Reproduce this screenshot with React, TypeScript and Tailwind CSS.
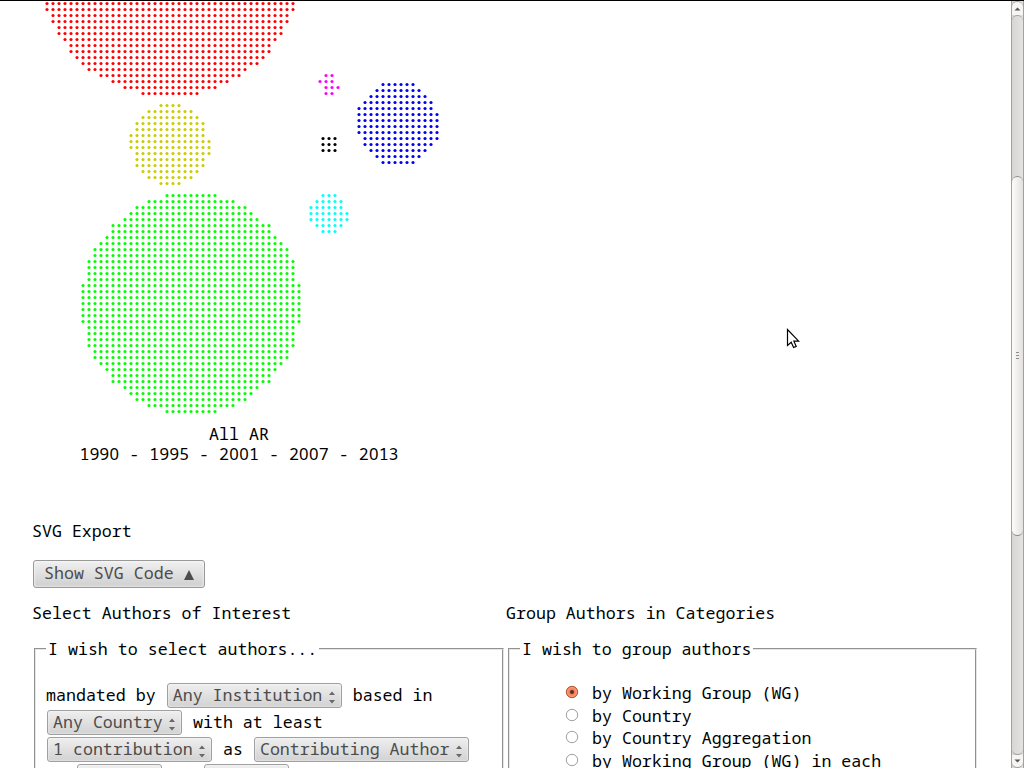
import type { ReactNode } from "react";

type Span = [number, number];

const mirrored: Span[] = [
  [14, 22], [11, 25], [9, 27], [8, 28], [7, 29], [5, 31], [5, 31], [4, 32], [3, 33], [2, 34], [2, 34],
  [1, 35], [1, 35], [1, 35], [1, 35], [0, 36], [0, 36], [0, 36],
];

const groups: { name: string; x: number; y: number; color: string; rows: Span[] }[] = [
  {
    name: "red", x: 47, y: 3.5, color: "#ff0000",
    rows: [[0, 41], [0, 41], [1, 40], [1, 40], [2, 39], [2, 39], [3, 38], [4, 37], [4, 37], [5, 36], [6, 35], [7, 33], [9, 32], [11, 30], [13, 28], [16, 25]],
  },
  {
    name: "yellow", x: 131, y: 105.5, color: "#cccc00",
    rows: [[5, 8], [3, 10], [2, 11], [1, 12], [1, 12], [0, 12], [0, 13], [0, 13], [1, 13], [1, 12], [1, 12], [2, 11], [3, 10], [5, 8]],
  },
  { name: "green", x: 83, y: 195.5, color: "#00ff00", rows: [...mirrored, [0, 36], ...[...mirrored].reverse()] },
  { name: "magenta", x: 320, y: 75.5, color: "#ff00ff", rows: [[1, 2], [0, 2], [1, 3], [1, 2]] },
  { name: "black", x: 323, y: 138.5, color: "#000000", rows: [[0, 2], [0, 2], [0, 2]] },
  { name: "cyan", x: 311, y: 195.5, color: "#00ffff", rows: [[2, 4], [1, 5], [0, 5], [0, 6], [0, 6], [1, 5], [2, 4]] },
  {
    name: "blue", x: 359, y: 84.5, color: "#0000f5",
    rows: [[4, 9], [3, 10], [2, 11], [1, 12], [0, 12], [0, 13], [0, 13], [0, 13], [0, 13], [1, 13], [1, 12], [2, 11], [3, 10], [4, 9]],
  },
];

function DotChart() {
  return (
    <svg width="480" height="423" viewBox="0 1 480 423" className="block shrink-0">
      {groups.map((g) => (
        <g key={g.name} fill={g.color}>
          {g.rows.flatMap(([from, to], r) =>
            Array.from({ length: to - from + 1 }, (_, i) => (
              <circle key={`${r}-${i}`} cx={g.x + (from + i) * 6} cy={g.y + r * 6} r="1.55" />
            )),
          )}
        </g>
      ))}
    </svg>
  );
}

// Open zeros: the monospaced face draws them slashed.
function Years({ text }: { text: string }) {
  return (
    <p className="h-[20px]">
      {text.split(/(0)/).map((part, i) =>
        part === "0" ? (
          <span key={i} className="inline-block h-[20px] w-[0.6em] text-center align-top font-['Noto_Sans',sans-serif] leading-[20px]">0</span>
        ) : (
          part
        ),
      )}
    </p>
  );
}

function Select({ children, className = "" }: { children?: ReactNode; className?: string }) {
  return (
    <span
      className={`mx-px flex h-[25px] shrink-0 items-center justify-between rounded-[3px] border border-[#a0a0a0] bg-linear-to-b from-[#efefef] to-[#d2d2d2] pr-[5px] pl-[5px] text-[#4c4c4c] shadow-[inset_0_0_2px_#ffffff] ${className}`}
    >
      <span className="pb-[2px]">{children}</span>
      <svg width="8" height="13" viewBox="0 0 8 13" className="mt-[3px]" fill="#686868">
        <path d="M1 4 L4 0.5 L7 4 Z M1 9 L4 12.5 L7 9 Z" />
      </svg>
    </span>
  );
}

function Words({ children }: { children: ReactNode }) {
  return <span className="pb-[2px]">{children}</span>;
}

function Radio({ label, checked = false, className = "" }: { label: string; checked?: boolean; className?: string }) {
  return (
    <div className={`flex shrink-0 items-start ${className}`}>
      <svg width="14" height="14" viewBox="0 0 14 14" className="mt-[3px] shrink-0">
        <circle cx="7" cy="7" r="5.7" fill={checked ? "#f1845c" : "#ffffff"} stroke={checked ? "#b4532f" : "#a0a0a0"} strokeWidth="1" />
        {checked && <circle cx="7" cy="7" r="4.4" fill="none" stroke="#f8a486" strokeWidth="0.8" />}
        {checked && <circle cx="7" cy="7" r="2" fill="#5c2c1c" />}
      </svg>
      <span className="ml-[13px] leading-[22px]">{label}</span>
    </div>
  );
}

function Fieldset({ legend, children, className = "" }: { legend: string; children: ReactNode; className?: string }) {
  return (
    <fieldset className={`h-[160px] min-w-0 border-2 border-[#e6e6e6] px-[10px] [border-style:groove] ${className}`}>
      <legend className="h-[20px] px-[2px] leading-[20px]">{legend}</legend>
      {children}
    </fieldset>
  );
}

function Scrollbar() {
  return (
    <div className="flex w-[13px] shrink-0 flex-col border-x border-[#a3a09d] bg-linear-to-r from-[#d8d5d3] to-[#e4e3e1]">
      <div className="flex h-[14px] shrink-0 items-center justify-center rounded-t-[6px] border-t border-[#a3a09d] bg-[#f6f5f4]">
        <svg width="7" height="4" viewBox="0 0 7 4"><path d="M0.5 3.5 L3.5 0.5 L6.5 3.5 Z" fill="#555" /></svg>
      </div>
      <div className="h-[161px] shrink-0 rounded-t-[6px] border-t border-[#a3a09d]" />
      <div className="flex h-[360px] shrink-0 flex-col items-center justify-center gap-[2px] rounded-[6px] border-y border-[#8f8c89] bg-linear-to-r from-[#fcfcfb] to-[#e3e1e0] pb-[2px]">
        <span className="h-px w-[3px] bg-[#8f8c89]" />
        <span className="h-px w-[3px] bg-[#8f8c89]" />
        <span className="h-px w-[3px] bg-[#8f8c89]" />
      </div>
      <div className="flex-1 rounded-b-[6px] border-b border-[#a3a09d]" />
      <div className="flex h-[13px] shrink-0 items-center justify-center rounded-b-[6px] border-b border-[#a3a09d] bg-[#f6f5f4]">
        <svg width="7" height="4" viewBox="0 0 7 4"><path d="M0.5 0.5 L3.5 3.5 L6.5 0.5 Z" fill="#555" /></svg>
      </div>
    </div>
  );
}

export default function App() {
  return (
    <div className="flex h-[768px] w-[1024px] overflow-hidden border-t border-black bg-white font-['Droid_Sans_Mono','Noto_Sans_Mono','DejaVu_Sans_Mono',monospace] text-[16.64px] leading-[20px] whitespace-pre text-black">
      <main className="flex min-w-0 flex-1 flex-col overflow-hidden">
        <DotChart />
        <div className="ml-[39px] w-[400px] shrink-0 text-center">
          <p className="h-[20px]">All AR</p>
          <Years text="1990 - 1995 - 2001 - 2007 - 2013" />
        </div>
        <h2 className="mt-[57px] ml-[32px] shrink-0">SVG Export</h2>
        <button className="mt-[19px] ml-[33px] flex h-[28px] w-[172px] shrink-0 items-center rounded-[3px] border border-[#999999] bg-linear-to-b from-[#f0f0f0] to-[#cfcfcf] pb-[2px] pl-[10px] text-[#4c4c4c] shadow-[inset_0_0_3px_#ffffff]">
          <span>Show SVG Code </span>
          <svg width="10" height="10" viewBox="0 0 10 10" className="mt-[3px]"><path d="M0 10 L5 0 L10 10 Z" fill="#4c4c4c" /></svg>
        </button>
        <div className="mt-[15px] flex shrink-0">
          <section className="ml-[32px] w-[474px]">
            <h2>Select Authors of Interest</h2>
            <Fieldset legend="I wish to select authors..." className="mt-[16px] ml-[2px] w-[470px]">
              <div className="mt-[24px] flex flex-col gap-[2px]">
                <div className="flex items-center"><Words>mandated by </Words><Select className="w-[175px]">Any Institution</Select><Words> based in</Words></div>
                <div className="flex items-center"><Select className="w-[135px]">Any Country</Select><Words> with at least</Words></div>
                <div className="flex items-center"><Select className="w-[165px]">1 contribution</Select><Words> as </Words><Select className="w-[215px]">Contributing Author</Select></div>
                <div className="flex items-center gap-[40px] pl-[30px]"><Select className="w-[85px]" /><Select className="w-[85px]" /></div>
              </div>
            </Fieldset>
          </section>
          <section className="w-[480px]">
            <h2>Group Authors in Categories</h2>
            <Fieldset legend="I wish to group authors" className="mt-[16px] ml-[2px] w-[469px]">
              <div className="mt-[23px] ml-[45px] flex flex-col">
                <Radio label="by Working Group (WG)" checked className="h-[23px]" />
                <Radio label="by Country" className="h-[22px]" />
                <Radio label="by Country Aggregation" className="h-[23px]" />
                <Radio label="by Working Group (WG) in each" className="h-[22px]" />
              </div>
            </Fieldset>
          </section>
        </div>
      </main>
      <Scrollbar />
      <svg width="14" height="22" viewBox="0 0 14 22" className="absolute top-[328px] left-[786px]">
        <path d="M1.5 1.5 L1.5 17.5 L5.2 14.2 L7.6 19.5 L10.2 18.4 L7.9 13.2 L12.7 13.2 Z" fill="#ffffff" stroke="#000000" strokeWidth="1.2" />
      </svg>
    </div>
  );
}
